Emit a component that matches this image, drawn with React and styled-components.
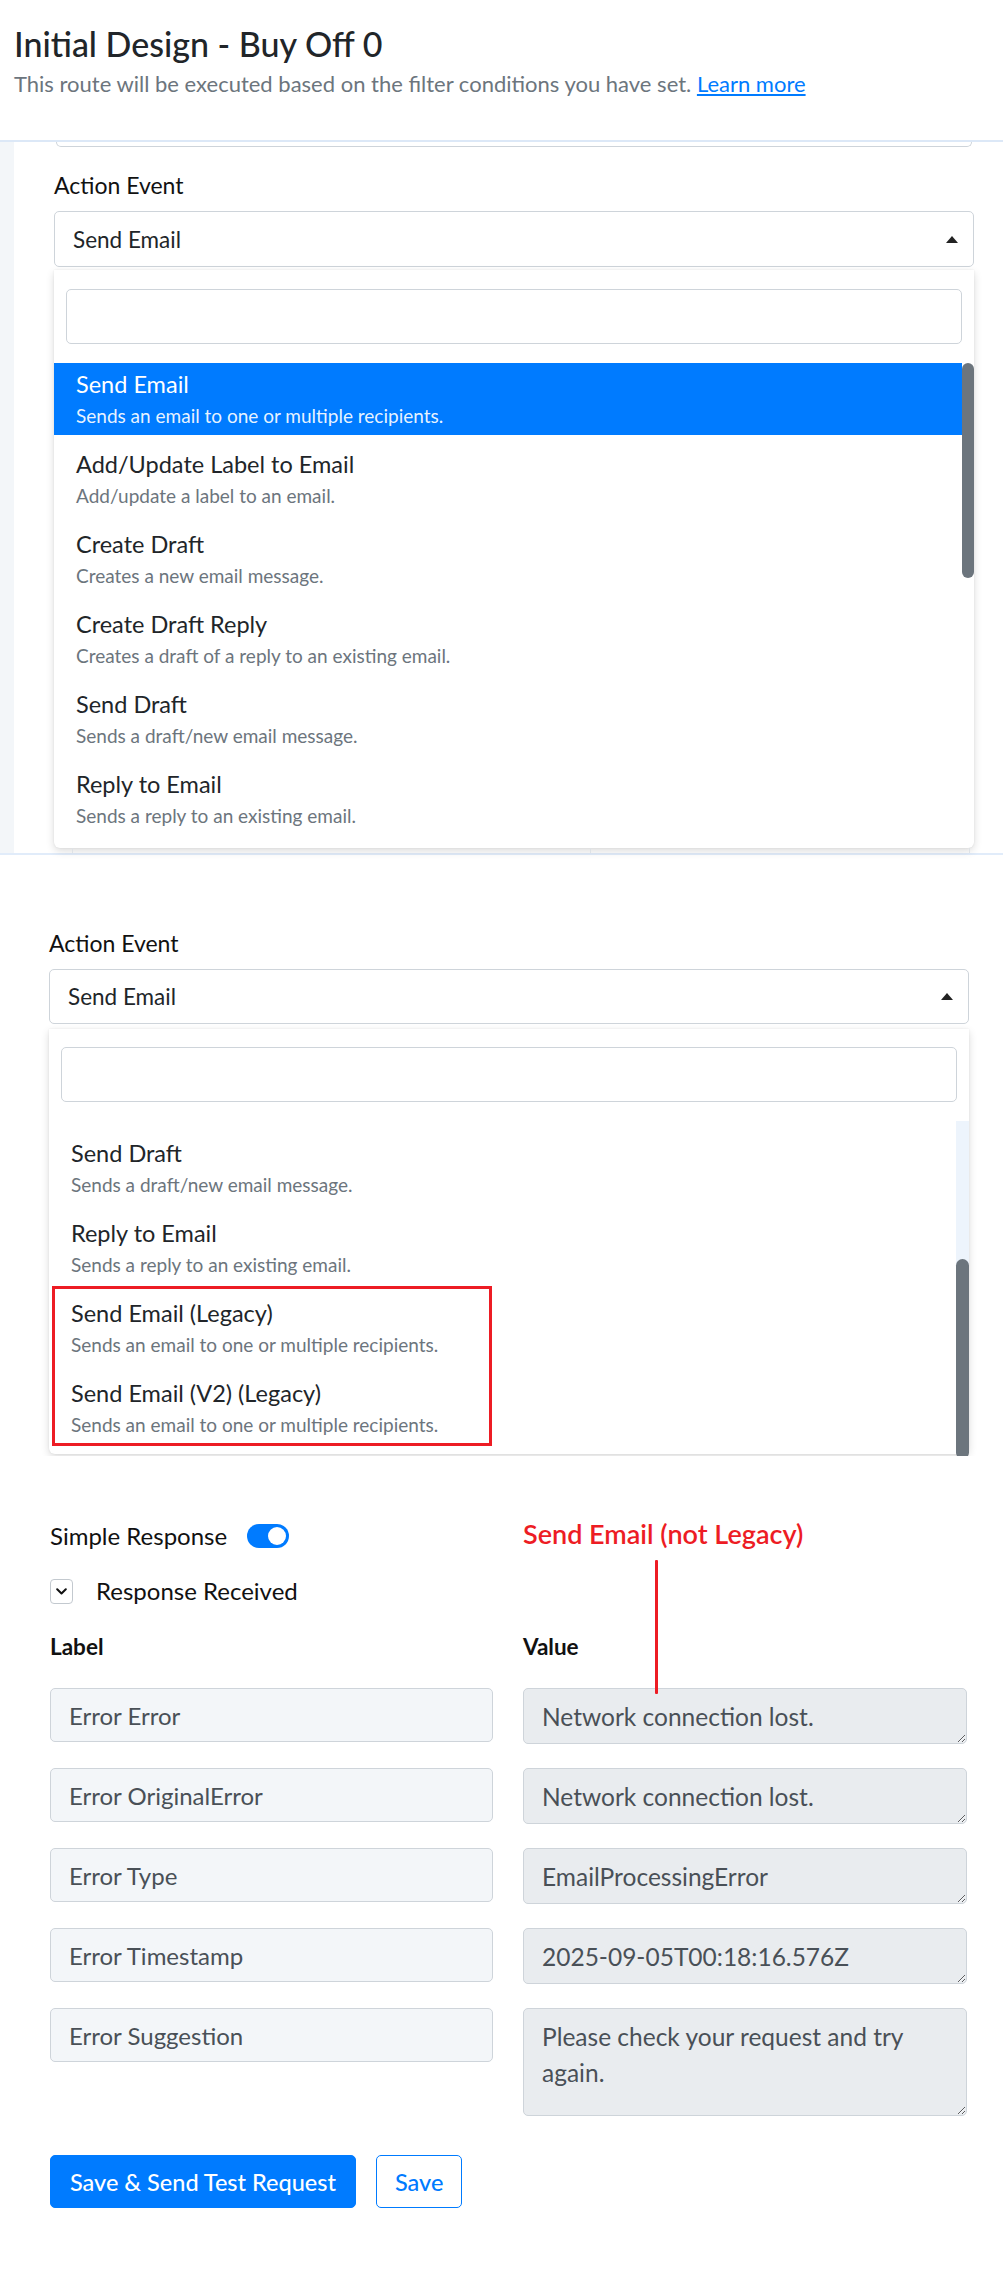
import React from "react";
import styled, { createGlobalStyle } from "styled-components";

const GlobalStyle = createGlobalStyle`
  html, body { margin: 0; padding: 0; background: #ffffff; }
  body { font-family: Lato, "Open Sans", Arial, sans-serif; color: #212529; }
  * { box-sizing: border-box; }
`;

const Page = styled.div`
  width: 1003px;
  min-height: 2281px;
  background: #fff;
`;

/* ---------- header ---------- */
const Header = styled.header`
  height: 142px;
  padding: 23px 14px 0;
  border-bottom: 2px solid #dce8f7;
`;
const Title = styled.h1`
  margin: 0;
  font-size: 34px;
  line-height: 42px;
  font-weight: 500;
  color: #212529;
`;
const Subtitle = styled.p`
  margin: 2px 0 0;
  font-size: 22px;
  line-height: 34px;
  color: #6c757d;
`;
const Link = styled.a`
  color: #007bff;
  text-decoration: underline;
`;

/* ---------- screen one ---------- */
const ScreenOne = styled.section`
  display: flex;
  border-bottom: 2px solid #e1ecfa;
`;
const Gutter = styled.div`
  width: 14px;
  background: #f3f6f9;
`;
const PanelBody = styled.div`
  flex: 1;
  padding: 0 29px 0 40px;
`;
const PrevInputEdge = styled.div`
  margin: 0 2px;
  height: 5px;
  border: 1px solid #ced4da;
  border-top: none;
  border-radius: 0 0 5px 5px;
`;

const ScreenTwo = styled.section`
  padding: 71px 34px 0 49px;
  height: 601px;
  overflow: hidden;
`;

const FieldLabel = styled.div`
  margin-top: ${(p) => p.$top || 0}px;
  font-size: 23px;
  line-height: 34px;
  color: #111;
`;
const SelectBox = styled.div`
  margin-top: 9px;
  height: ${(p) => p.$h}px;
  border: 1px solid #ced4da;
  border-radius: 5px;
  padding: 0 15px 0 18px;
  display: flex;
  align-items: center;
  justify-content: space-between;
  font-size: 22.5px;
  color: #212529;
`;
const Caret = styled.span`
  width: 0;
  height: 0;
  border-style: solid;
  border-width: 0 6px 7px 6px;
  border-color: transparent transparent #222 transparent;
`;
const Menu = styled.div`
  margin-top: ${(p) => p.$gap}px;
  background: #fff;
  border-radius: 0 0 6px 6px;
  box-shadow: 0 3px 8px rgba(0, 0, 0, 0.14), 0 0 2px rgba(0, 0, 0, 0.08);
  padding: ${(p) => p.$pt}px 0 ${(p) => p.$pb}px;
`;
const SearchInput = styled.input`
  display: block;
  margin: 0 12px;
  width: calc(100% - 24px);
  height: 55px;
  border: 1px solid #ced4da;
  border-radius: 5px;
  background: #fff;
  outline: none;
`;
const ListRow = styled.div`
  position: relative;
  margin-top: 19px;
  height: ${(p) => p.$h}px;
  display: flex;
`;
const List = styled.div`
  flex: 1;
  overflow: hidden;
  padding-top: ${(p) => p.$offset || 0}px;
`;
const Item = styled.div`
  height: 72px;
  margin-bottom: 8px;
  padding: 6px 22px 0;
  background: ${(p) => (p.$active ? "#007bff" : "transparent")};
`;
const ItemTitle = styled.div`
  font-size: 23.5px;
  line-height: 30px;
  color: ${(p) => (p.$active ? "#fff" : "#212529")};
`;
const ItemDesc = styled.div`
  margin-top: 3px;
  font-size: 19px;
  line-height: 28px;
  color: ${(p) => (p.$active ? "rgba(255,255,255,0.92)" : "#6c757d")};
`;
const Scrollbar = styled.div`
  width: ${(p) => p.$w}px;
  background: ${(p) => p.$track};
`;
const Thumb = styled.div`
  margin-top: ${(p) => p.$top}px;
  height: ${(p) => p.$h}px;
  border-radius: 7px;
  background: #6c757d;
`;
const TableEdge = styled.div`
  display: flex;
  height: 5px;
  margin: 0 4px 0 18px;
`;
const EdgeCell = styled.div`
  width: ${(p) => (p.$w ? `${p.$w}px` : "auto")};
  flex: ${(p) => (p.$w ? "none" : 1)};
  border-left: ${(p) => (p.$first ? "1px solid #dee2e6" : "none")};
  border-right: 1px solid #dee2e6;
`;
const RedBox = styled.div`
  position: absolute;
  left: 3px;
  top: 165px;
  width: 440px;
  height: 160px;
  border: 3px solid #ed1c24;
  pointer-events: none;
`;

/* ---------- response section ---------- */
const ResponseSection = styled.section`
  position: relative;
  padding: 63px 36px 70px 50px;
`;
const ToggleRow = styled.div`
  display: flex;
  align-items: center;
  gap: 20px;
  font-size: 24px;
  line-height: 34px;
  color: #111;
`;
const Switch = styled.span`
  width: 42px;
  height: 24px;
  border-radius: 12px;
  background: #007bff;
  display: flex;
  align-items: center;
  justify-content: flex-end;
  padding: 0 3px;
`;
const Knob = styled.span`
  width: 18px;
  height: 18px;
  border-radius: 50%;
  background: #fff;
`;
const CollapseRow = styled.div`
  margin-top: 21px;
  display: flex;
  align-items: center;
  gap: 23px;
  font-size: 24px;
  line-height: 34px;
  color: #111;
`;
const ChevronBox = styled.span`
  width: 23px;
  height: 25px;
  border: 1px solid #c3c9cf;
  border-radius: 4px;
  display: flex;
  align-items: center;
  justify-content: center;
`;
const FieldGrid = styled.div`
  margin-top: 22px;
  display: grid;
  grid-template-columns: 443px 444px;
  column-gap: 30px;
  row-gap: 24px;
  align-items: start;
`;
const ColHead = styled.div`
  font-size: 22.5px;
  line-height: 34px;
  font-weight: 700;
  color: #111;
`;
const LabelInput = styled.input`
  display: block;
  width: 100%;
  height: 54px;
  padding: 0 18px;
  border: 1px solid #ced4da;
  border-radius: 5px;
  background: #f3f6f9;
  font-family: inherit;
  font-size: 24px;
  color: #495057;
  outline: none;
`;
const ValueArea = styled.textarea`
  display: block;
  width: 100%;
  height: ${(p) => (p.$tall ? 108 : 56)}px;
  padding: 10px 18px;
  border: 1px solid #ced4da;
  border-radius: 5px;
  background: #e9ecef;
  font-family: inherit;
  font-size: 24.5px;
  line-height: 36px;
  color: #495057;
  outline: none;
  resize: vertical;
  overflow: hidden;
`;
const ButtonRow = styled.div`
  margin-top: 39px;
  display: flex;
  gap: 20px;
`;
const Button = styled.button`
  height: 53px;
  padding: 0 ${(p) => (p.$primary ? 19 : 18)}px;
  border-radius: 5px;
  border: 1px solid #007bff;
  background: ${(p) => (p.$primary ? "#007bff" : "#fff")};
  color: ${(p) => (p.$primary ? "#fff" : "#007bff")};
  font-family: inherit;
  font-size: 23.5px;
  font-weight: 500;
`;
const Annotation = styled.div`
  position: absolute;
  left: 523px;
  top: 61px;
  font-size: 27px;
  line-height: 34px;
  font-weight: 600;
  color: #ed1c24;
`;
const AnnotationLine = styled.div`
  position: absolute;
  left: 655px;
  top: 104px;
  width: 3px;
  height: 134px;
  background: #ed1c24;
  border-radius: 1px;
`;

const firstItems = [
  ["Send Email", "Sends an email to one or multiple recipients."],
  ["Add/Update Label to Email", "Add/update a label to an email."],
  ["Create Draft", "Creates a new email message."],
  ["Create Draft Reply", "Creates a draft of a reply to an existing email."],
  ["Send Draft", "Sends a draft/new email message."],
  ["Reply to Email", "Sends a reply to an existing email."],
];
const secondItems = [
  ["Send Draft", "Sends a draft/new email message."],
  ["Reply to Email", "Sends a reply to an existing email."],
  ["Send Email (Legacy)", "Sends an email to one or multiple recipients."],
  ["Send Email (V2) (Legacy)", "Sends an email to one or multiple recipients."],
];
const fields = [
  ["Error Error", "Network connection lost."],
  ["Error OriginalError", "Network connection lost."],
  ["Error Type", "EmailProcessingError"],
  ["Error Timestamp", "2025-09-05T00:18:16.576Z"],
  ["Error Suggestion", "Please check your request and try again."],
];

function Option({ title, desc, active }) {
  return (
    <Item $active={active}>
      <ItemTitle $active={active}>{title}</ItemTitle>
      <ItemDesc $active={active}>{desc}</ItemDesc>
    </Item>
  );
}

export default function App() {
  return (
    <Page>
      <GlobalStyle />
      <Header>
        <Title>Initial Design - Buy Off 0</Title>
        <Subtitle>
          This route will be executed based on the filter conditions you have set.{" "}
          <Link href="#">Learn more</Link>
        </Subtitle>
      </Header>

      <ScreenOne>
        <Gutter />
        <PanelBody>
          <PrevInputEdge />
          <FieldLabel $top={21}>Action Event</FieldLabel>
          <SelectBox $h={56}>
            <span>Send Email</span>
            <Caret />
          </SelectBox>
          <Menu $gap={3} $pt={19} $pb={11}>
            <SearchInput readOnly />
            <ListRow $h={474}>
              <List>
                {firstItems.map(([t, d], i) => (
                  <Option key={t} title={t} desc={d} active={i === 0} />
                ))}
              </List>
              <Scrollbar $w={12} $track="#ffffff">
                <Thumb $top={0} $h={215} />
              </Scrollbar>
            </ListRow>
          </Menu>
          <TableEdge>
            <EdgeCell $first $w={519} />
            <EdgeCell />
          </TableEdge>
        </PanelBody>
      </ScreenOne>

      <ScreenTwo>
        <FieldLabel>Action Event</FieldLabel>
        <SelectBox $h={55}>
          <span>Send Email</span>
          <Caret />
        </SelectBox>
        <Menu $gap={5} $pt={18} $pb={0}>
          <SearchInput readOnly />
          <ListRow $h={333}>
            <List $offset={11}>
              {secondItems.map(([t, d]) => (
                <Option key={t} title={t} desc={d} />
              ))}
            </List>
            <Scrollbar $w={13} $track="#edf4fc">
              <Thumb $top={138} $h={200} />
            </Scrollbar>
            <RedBox />
          </ListRow>
        </Menu>
      </ScreenTwo>

      <ResponseSection>
        <ToggleRow>
          Simple Response
          <Switch>
            <Knob />
          </Switch>
        </ToggleRow>
        <CollapseRow>
          <ChevronBox>
            <svg width="11" height="7" viewBox="0 0 11 7" fill="none">
              <path d="M1.2 1.2 L5.5 5.5 L9.8 1.2" stroke="#111" strokeWidth="2" strokeLinecap="round" strokeLinejoin="round" />
            </svg>
          </ChevronBox>
          Response Received
        </CollapseRow>
        <FieldGrid>
          <ColHead>Label</ColHead>
          <ColHead>Value</ColHead>
          {fields.map(([label, value], i) => (
            <React.Fragment key={label}>
              <LabelInput readOnly value={label} />
              <ValueArea readOnly value={value} $tall={i === fields.length - 1} />
            </React.Fragment>
          ))}
        </FieldGrid>
        <ButtonRow>
          <Button $primary>Save &amp; Send Test Request</Button>
          <Button>Save</Button>
        </ButtonRow>
        <Annotation>Send Email (not Legacy)</Annotation>
        <AnnotationLine />
      </ResponseSection>
    </Page>
  );
}
